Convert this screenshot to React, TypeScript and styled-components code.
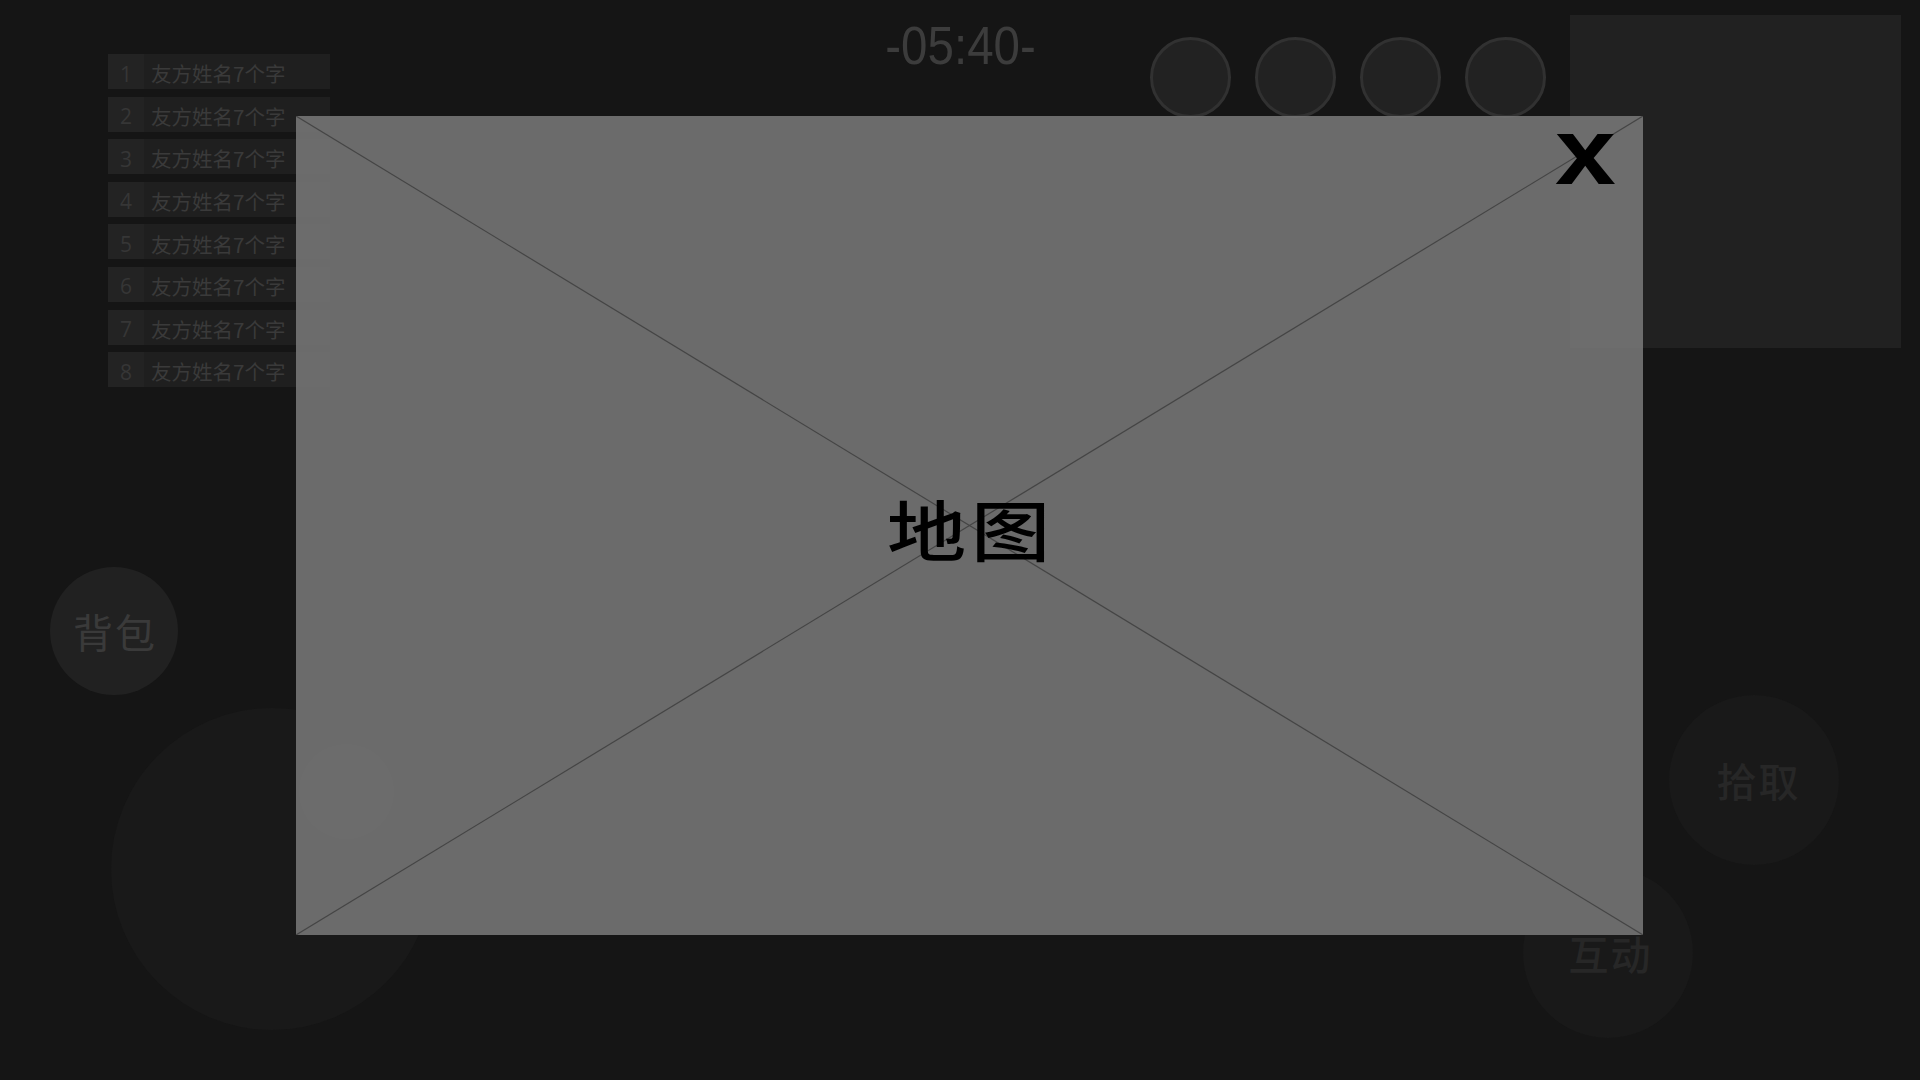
import React from "react";
import styled, { createGlobalStyle } from "styled-components";

const GlobalStyle = createGlobalStyle`
  html, body { margin: 0; padding: 0; background: #151515; }
  body { font-family: "Liberation Sans", "Noto Sans CJK SC", sans-serif; }
  * { box-sizing: border-box; }
`;

const Screen = styled.div`
  position: relative;
  width: 1920px;
  height: 1080px;
  overflow: hidden;
  background: #151515;
  display: flex;
  flex-direction: column;
`;

const TopBar = styled.div`
  display: flex;
  align-items: flex-start;
  padding: 15px 19px 0 108px;
`;

const FriendList = styled.div`
  margin-top: 39px;
  width: 223px;
  display: flex;
  flex-direction: column;
  gap: 7.6px;
`;

const FriendRow = styled.div`
  display: flex;
  height: 35px;
  background: #1f1f1f;
`;

const FriendIndex = styled.div`
  width: 36px;
  flex: none;
  display: flex;
  align-items: center;
  justify-content: center;
  padding-top: 5px;
  background: #232323;
  color: #363636;
  font-family: "Open Sans", "Liberation Sans", sans-serif;
  font-size: 21px;
  line-height: 1;
`;

const FriendName = styled.div`
  display: flex;
  align-items: center;
  padding: 4px 0 0 7px;
  color: #3a3a3a;
  font-family: "Noto Sans CJK SC", sans-serif;
  font-size: 20.5px;
  line-height: 1;
`;

const TimerBox = styled.div`
  margin-left: 555px;
  margin-top: 3px;
  width: 152px;
  display: flex;
  justify-content: center;
`;

const TimerText = styled.span`
  display: inline-block;
  color: #3c3c3c;
  font-family: "Liberation Sans", sans-serif;
  font-size: 54px;
  line-height: 1;
  transform: scaleX(0.88);
`;

const SlotRow = styled.div`
  margin-left: 113px;
  margin-top: 22px;
  display: flex;
  gap: 24px;
`;

const Slot = styled.div`
  width: 81px;
  height: 81px;
  border-radius: 50%;
  background: #222222;
  border: 3px solid #313131;
`;

const MiniPanel = styled.div`
  margin-left: 24px;
  width: 333px;
  height: 333px;
  background: #212121;
`;

const BottomArea = styled.div`
  display: flex;
  justify-content: space-between;
  align-items: flex-start;
  margin-top: 180px;
`;

const LeftControls = styled.div`
  display: flex;
  flex-direction: column;
  padding-left: 50px;
`;

const RoundButton = styled.div<{ $size: number; $bg: string; $fg: string; $weight?: number; $shift?: number }>`
  width: ${(p) => p.$size}px;
  height: ${(p) => p.$size}px;
  border-radius: 50%;
  background: ${(p) => p.$bg};
  color: ${(p) => p.$fg};
  display: flex;
  align-items: center;
  justify-content: center;
  padding-left: ${(p) => p.$shift ?? 2}px;
  font-family: "Noto Sans CJK SC", sans-serif;
  font-size: 40px;
  font-weight: ${(p) => p.$weight ?? 400};
  letter-spacing: 2px;
  flex: none;
`;

const Joystick = styled.div`
  position: relative;
  margin-left: 61px;
  margin-top: 13px;
  width: 322px;
  height: 322px;
  border-radius: 50%;
  background: #191919;
`;

const JoystickKnob = styled.div`
  position: absolute;
  left: 188px;
  top: 36px;
  width: 95px;
  height: 95px;
  border-radius: 50%;
  background: #1d1d1d;
`;

const RightControls = styled.div`
  display: flex;
  flex-direction: column;
  align-items: flex-end;
  margin-top: 128px;
  gap: 3px;
`;

const ActionSlot = styled.div<{ $right: number }>`
  margin-right: ${(p) => p.$right}px;
`;

const Overlay = styled.div`
  position: absolute;
  inset: 0;
  padding: 116px 277px 145px 296px;
  display: flex;
`;

const MapModal = styled.div`
  position: relative;
  flex: 1;
  background: rgba(122, 122, 122, 0.85);
  display: flex;
  align-items: center;
  justify-content: center;
`;

const Cross = styled.svg`
  position: absolute;
  inset: 0;
  width: 100%;
  height: 100%;
`;

const MapLabel = styled.div`
  position: relative;
  margin-top: 2px;
  margin-left: 2px;
  color: #000;
  font-family: "Noto Sans CJK SC", sans-serif;
  font-weight: 500;
  font-size: 66px;
  letter-spacing: 4px;
  line-height: 1;
  transform: scaleX(1.2);
`;

const CloseButton = styled.div`
  position: absolute;
  top: -12px;
  right: 27px;
  color: #000;
  font-family: "Liberation Sans", sans-serif;
  font-weight: 700;
  font-size: 95px;
  line-height: 1;
  transform: scaleX(1.15);
  transform-origin: right center;
`;

const friends = [1, 2, 3, 4, 5, 6, 7, 8];

export default function App() {
  return (
    <>
      <GlobalStyle />
      <Screen>
        <TopBar>
          <FriendList>
            {friends.map((n) => (
              <FriendRow key={n}>
                <FriendIndex>{n}</FriendIndex>
                <FriendName>友方姓名7个字</FriendName>
              </FriendRow>
            ))}
          </FriendList>
          <TimerBox>
            <TimerText>-05:40-</TimerText>
          </TimerBox>
          <SlotRow>
            <Slot />
            <Slot />
            <Slot />
            <Slot />
          </SlotRow>
          <MiniPanel />
        </TopBar>
        <BottomArea>
          <LeftControls>
            <RoundButton $size={128} $bg="#212121" $fg="#3a3a3a">
              背包
            </RoundButton>
            <Joystick>
              <JoystickKnob />
            </Joystick>
          </LeftControls>
          <RightControls>
            <ActionSlot $right={81}>
              <RoundButton $size={170} $bg="#191919" $fg="#272727" $weight={500} $shift={9}>
                拾取
              </RoundButton>
            </ActionSlot>
            <ActionSlot $right={227}>
              <RoundButton $size={170} $bg="#191919" $fg="#272727" $weight={500} $shift={5}>
                互动
              </RoundButton>
            </ActionSlot>
          </RightControls>
        </BottomArea>
        <Overlay>
          <MapModal>
            <Cross viewBox="0 0 100 100" preserveAspectRatio="none">
              <line x1="0" y1="0" x2="100" y2="100" stroke="#454545" strokeWidth="1.2" vectorEffect="non-scaling-stroke" />
              <line x1="100" y1="0" x2="0" y2="100" stroke="#454545" strokeWidth="1.2" vectorEffect="non-scaling-stroke" />
            </Cross>
            <MapLabel>地图</MapLabel>
            <CloseButton>x</CloseButton>
          </MapModal>
        </Overlay>
      </Screen>
    </>
  );
}
